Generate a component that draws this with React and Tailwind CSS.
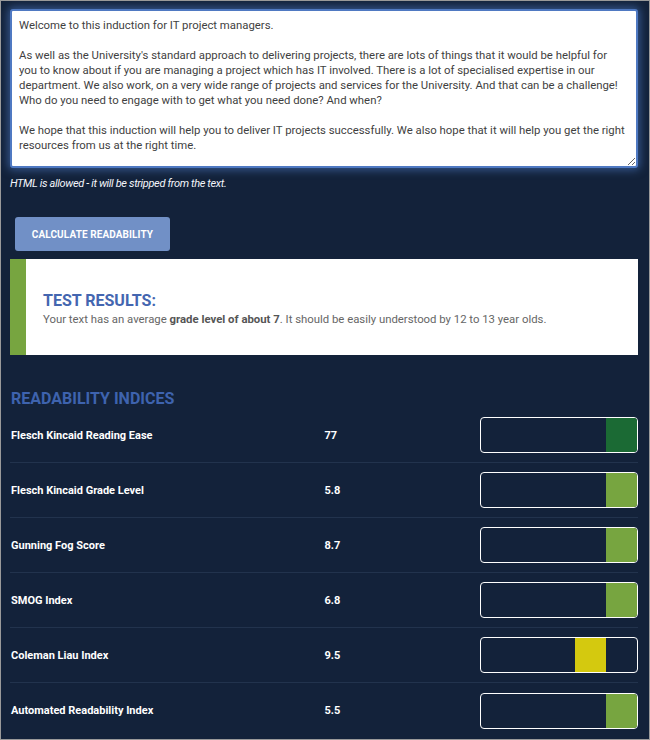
import React from 'react';

// Lines broken by hand so the wrap matches the original box
const sampleText = [
    'Welcome to this induction for IT project managers.',
    '',
    "As well as the University's standard approach to delivering projects, there are lots of things that it would be helpful for",
    'you to know about if you are managing a project which has IT involved. There is a lot of specialised expertise in our',
    'department. We also work, on a very wide range of projects and services for the University. And that can be a challenge!',
    'Who do you need to engage with to get what you need done? And when?',
    '',
    'We hope that this induction will help you to deliver IT projects successfully. We also hope that it will help you get the right',
    'resources from us at the right time.',
].join('\n');

const indices = [
    { name: 'Flesch Kincaid Reading Ease', value: '77', fill: 'bg-[#1b6a34]', pos: 'right' },
    { name: 'Flesch Kincaid Grade Level', value: '5.8', fill: 'bg-[#77a540]', pos: 'right' },
    { name: 'Gunning Fog Score', value: '8.7', fill: 'bg-[#77a540]', pos: 'right' },
    { name: 'SMOG Index', value: '6.8', fill: 'bg-[#77a540]', pos: 'right' },
    { name: 'Coleman Liau Index', value: '9.5', fill: 'bg-[#d4c90f]', pos: 'middle' },
    { name: 'Automated Readability Index', value: '5.5', fill: 'bg-[#77a540]', pos: 'right' },
];

// Score bar: the coloured segment sits in one of five slots
function ScoreBar({ fill, pos }) {
    return (
        <div className="w-[158px] h-[36px] border border-white rounded-[4px] overflow-hidden flex justify-end">
            <div className={`w-[31px] h-full ${fill}`} />
            {pos === 'middle' && <div className="w-[31px] h-full" />}
        </div>
    );
}

export default function App() {
    return (
        <div
            className="w-[650px] h-[740px] bg-[#13223a] border border-[#9a9a9a] overflow-hidden"
            style={{ fontFamily: 'Roboto, "Liberation Sans", sans-serif' }}
        >
            <div className="pl-[9px] pr-[11px] pt-[8px]">
                <textarea
                    defaultValue={sampleText}
                    wrap="off"
                    className="block w-full h-[159px] bg-white border-2 border-[#4f79c2] rounded-[3px] pl-[7px] pr-[4px] py-[7px] text-[11.35px] leading-[15px] text-[#3f3f3f] shadow-[0_0_8px_2px_rgba(80,130,210,0.55)] outline-none resize-y overflow-hidden"
                />
                <p className="mt-[9px] text-[11px] italic text-[#f4f6fa] leading-[14px] tracking-[-0.35px]">
                    HTML is allowed - it will be stripped from the text.
                </p>

                <button className="mt-[26px] ml-[5px] h-[34px] w-[155px] rounded-[3px] bg-[#7190c6] text-white text-[10px] font-bold uppercase tracking-[0.1px]">
                    Calculate Readability
                </button>

                <div className="mt-[8px] flex h-[96px] bg-white">
                    <div className="w-[16px] bg-[#77a540]" />
                    <div className="flex flex-col justify-center pl-[17px] pt-[4px]">
                        <h2 className="text-[16px] font-bold text-[#4466b0] leading-[20px]">TEST RESULTS:</h2>
                        <p className="text-[11.35px] text-[#666] leading-[16px]">
                            Your text has an average <span className="font-bold text-[#555]">grade level of about 7</span>. It should be easily understood by 12 to 13 year olds.
                        </p>
                    </div>
                </div>

                <h2 className="mt-[34px] ml-[1px] text-[16px] font-bold text-[#3e63ae] leading-[20px]">
                    READABILITY INDICES
                </h2>

                <div className="mt-[-1px]">
                    {indices.map((row, i) => (
                        <div
                            key={row.name}
                            className={`h-[55px] flex items-center ${i < indices.length - 1 ? 'border-b border-[#22334d]' : ''}`}
                        >
                            <div className="w-[315px] pl-[1px] pt-[2px] text-[11px] font-bold text-white">{row.name}</div>
                            <div className="w-[156px] pt-[2px] text-[11px] font-bold text-white">{row.value}</div>
                            <ScoreBar fill={row.fill} pos={row.pos} />
                        </div>
                    ))}
                </div>
            </div>
        </div>
    );
}
